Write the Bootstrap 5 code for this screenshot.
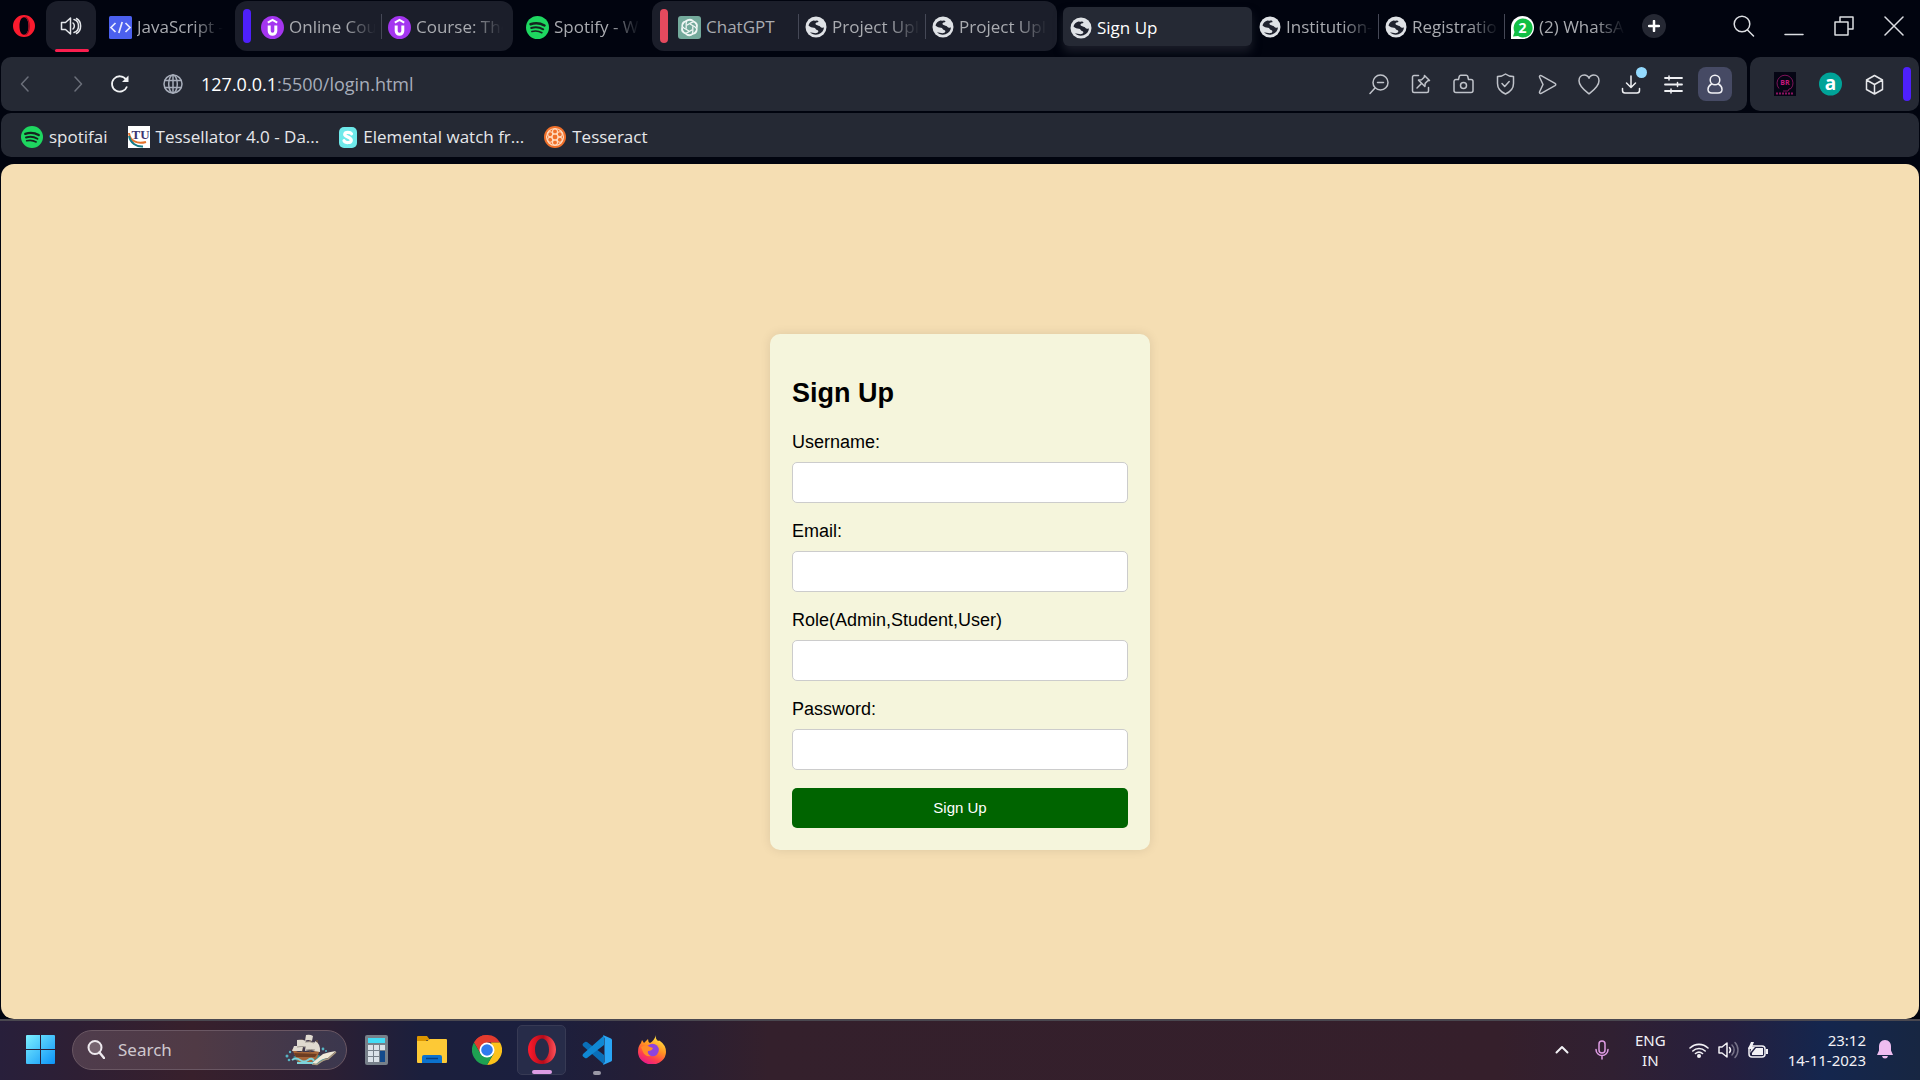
<!DOCTYPE html>
<html lang="en">
<head>
<meta charset="utf-8">
<meta name="viewport" content="width=device-width, initial-scale=1">
<title>Sign Up</title>
<link href="https://cdn.jsdelivr.net/npm/bootstrap@5.3.0/dist/css/bootstrap.min.css" rel="stylesheet">
<style>
  :root { --chrome: #01040f; --panel: #252934; --group: #1b1e2a; --ui: "Open Sans", "Noto Sans", sans-serif; }
  body { background: var(--chrome); font-family: var(--ui); font-size: 17px; line-height: 24px; }
  svg { display: block; flex: none; }
  button { background: none; border: 0; padding: 0; color: inherit; }
  .line-icon { fill: none; stroke: currentColor; stroke-width: 1.5; stroke-linecap: round; stroke-linejoin: round; }

  .tabstrip { padding: 1px 0 0 13px; height: 57px; color: #a9abb0; }
  .tabstrip > * { flex-shrink: 0; }
  .logo-btn { height: 50px; margin-right: 11px; }
  .audio-tab { width: 50px; height: 50px; margin-right: 6px; border-radius: 12px; background: var(--group); color: #e4e6ea; }
  .audio-tab::after { content: ""; width: 34px; height: 3px; border-radius: 2px; background: #fa1e4e; position: absolute; bottom: -1px; left: 9px; }
  .page-tab { flex: 0 1 126px; width: 126px; height: 50px; padding: 2px 5px 0 7px; gap: 5px; color: inherit; text-decoration: none; overflow: hidden; }
  .page-tab span { flex: 1; min-width: 0; overflow: hidden; white-space: nowrap; -webkit-mask-image: linear-gradient(90deg, #000 65%, transparent); mask-image: linear-gradient(90deg, #000 65%, transparent); }
  .page-tab.whole span { -webkit-mask-image: none; mask-image: none; }
  .page-tab.divided { background: linear-gradient(#454856, #454856) 0 13px / 1px 25px no-repeat; }
  .tab-group { height: 50px; margin-left: 7px; margin-right: 6px; padding: 0 5px 0 8px; border-radius: 12px; background: var(--group); }
  .tab-group .page-tab { flex-basis: 127px; width: 127px; }
  .group-bar { width: 8px; height: 34px; border-radius: 4px; background: #4e20fb; }
  .group-bar.red { background: #e54a5e; }
  .tab-group .group-bar { margin-right: 3px; }
  .page-tab.current { flex-basis: 189px; width: 189px; height: 39px; margin-top: 6px; border-radius: 6px; background: var(--panel); color: #fff; box-shadow: 0 6px 10px #33364180; }
  .new-tab { width: 24px; height: 24px; margin: 13px 0 0 12px; border-radius: 50%; background: #252833; color: #fff; }
  .win-ctls { padding-right: 1px; }
  .win-ctl { height: 50px; width: 50px; color: #dcdee2; }

  .bars { padding: 0 1px; gap: 2px; }
  .bars-row { gap: 3px; }
  .panel { background: var(--panel); border-radius: 10px; }
  .toolbar { height: 54px; padding-right: 15px; color: #c0c3ca; }
  .nav-btn { width: 51px; height: 40px; color: #6b6f7a; }
  .nav-btn.back { padding-right: 4px; }
  .nav-btn.reload { width: 34px; color: #f1f2f4; }
  .address { margin-left: 26px; gap: 18px; color: #a7adba; font-size: 18px; }
  .address b { font-weight: 400; color: #fff; }
  .tool-btn { width: 42px; height: 40px; }
  .tool-btn.lit { color: #eff0f3; }
  .news-dot { width: 11px; height: 11px; border-radius: 50%; background: #94dafe; top: 3px; right: 5px; }
  .account { width: 34px; height: 34px; margin-left: 4px; border-radius: 8px; background: #464a64; color: #f2f2f6; }
  .side-panel { padding: 0 8px 0 24px; color: #e6e7ea; }
  .side-panel .group-bar { margin-left: 19px; }
  .side-gap { margin-left: 23px; }
  .bookmarks { height: 44px; padding: 4px 0 0 20px; gap: 20px; margin-bottom: 7px; }
  .bookmarks a { gap: 6px; color: #e6e7ea; text-decoration: none; white-space: nowrap; }

  .viewport-page { margin: 0 1px; border-radius: 13px; background: #f5deb3; font-family: "Liberation Sans", Arial, sans-serif; font-size: 18px; line-height: 21px; color: #000; }
  .signup { width: 380px; padding: 22px; border-radius: 10px; background: #f5f5dc; box-shadow: 0 0 11px rgba(0,0,0,.1); }
  .signup h2 { font-size: 27px; font-weight: 700; line-height: 30px; margin: 22px 0 24px; }
  .signup label { margin-bottom: 9px; display: block; }
  .signup .form-control { height: 41px; margin-bottom: 18px; border: 1px solid #ccc; border-radius: 5px; background: #fff; }
  .signup .btn { height: 40px; background: #006400; color: #fff; border: 0; border-radius: 5px; font-size: 15px; line-height: 18px; }

  .taskbar { height: 61px; padding: 0 0 2px 26px; border-top: 2px solid #4a4850; color: #f2f1f5; font-family: "Noto Sans", sans-serif; font-size: 15px; line-height: 20px;
    background: linear-gradient(90deg, #281f3b 0, #2e1f34 4%, #38202c 10%, #2c1f33 17%, #1b1f3d 22%, #1b1f3e 28%, #241e36 33%, #34202c 40%, #351f2b 78%, #302032 84%, #261f3e 90%, #14264e 95%, #172642 100%); }
  .search-pill { width: 275px; height: 40px; margin-left: 17px; padding: 0 9px 0 14px; border: 1px solid #6a5763; border-radius: 20px; background: linear-gradient(90deg, #4f3c4c, #503a45 45%, #3b374e); }
  .search-pill input { flex: 1; min-width: 0; margin-left: 13px; padding: 0; border: 0; outline: 0; background: none; color: #fff; font-size: 17px; }
  .search-pill input::placeholder { color: #cfc8cf; opacity: 1; }
  .task-apps { margin-left: 2px; }
  .task-apps button { width: 55px; height: 50px; }
  .task-apps .open { background: #272c49; border: 1px solid #373a54; border-radius: 5px; width: 49px; margin: 0 3px; }
  .run-mark { width: 8px; height: 4px; border-radius: 2px; background: #9a98a6; bottom: 0; left: 50%; transform: translateX(-50%); }
  .open .run-mark { width: 20px; background: #dc9de4; }
  .tray { padding-right: 27px; }
  .tray-gap { margin-left: 26px; }
  .status-btn { margin-left: 23px; gap: 9px; }
  .clock-btn { margin-left: 20px; }
  .bell-btn { margin-left: 11px; }
</style>
</head>
<body class="d-flex flex-column min-vh-100 overflow-x-hidden">

<svg width="0" height="0" class="position-absolute" aria-hidden="true">
  <symbol id="earth" viewBox="0 0 22 22"><circle cx="11" cy="11" r="10.5" fill="#dfe2e6"/><path d="M8.500 4.500C6 5 4 7 3.500 9.500c1.700 1.700 3.500 2.200 5.500 2.200 1.700 0 1.400 2 3 2.400 2.200.6 1.500 2.600-.5 3-1.800.4-5-.8-6.500-.8 2 2.200 5.500 3 8.500 2 3.500-1.200 5.300-4 5.500-7-1.500 1-3 .6-3.700-.6-.8-1.300-2.600-.8-4.200-1.900-1.500-1.200-.3-2.200 1.600-2.500C14.500 6 13 4 11 4.700c-1 .3-1.500-.5-2.500-.2z" fill="#20232f"/></symbol>
  <symbol id="udemy" viewBox="0 0 23 23"><circle cx="11.500" cy="11.500" r="11.500" fill="#a435f0"/><path d="M6.800 6.600 11.500 3.800l4.700 2.800" fill="none" stroke="#fff" stroke-width="2"/><path d="M8.200 9.500v5.500a3.300 3.300 0 0 0 6.600 0V9.500" fill="none" stroke="#fff" stroke-width="3"/></symbol>
  <symbol id="spotify" viewBox="0 0 23 23"><circle cx="11.500" cy="11.500" r="11.500" fill="#1ed760"/><g fill="none" stroke="#15241f" stroke-linecap="round"><path d="M4.500 8.200c4.500-1.500 10-1 14 1.300" stroke-width="2.500"/><path d="M5.200 12c4-1.200 8.500-.7 12 1.300" stroke-width="2"/><path d="M5.900 15.500c3.500-.9 7-.5 10 1.200" stroke-width="1.600"/></g></symbol>
</svg>

<nav class="tabstrip d-flex align-items-start" aria-label="Tabs">
  <button class="logo-btn d-flex align-items-center" aria-label="Menu"><svg width="22" height="22" viewBox="0 0 22 22"><path fill="#fb1b2e" fill-rule="evenodd" d="M11 0a11 11 0 1 0 0 22 11 11 0 0 0 0-22zm0 2.200c3 0 4.500 4 4.500 8.800S14 19.800 11 19.800 6.500 15.800 6.500 11 8 2.200 11 2.200z"/><path d="M12.500 2c5 3.500 5 14.500 0 18" fill="none" stroke="#8d1025" stroke-width="1.200"/></svg></button>
  <button class="audio-tab position-relative d-flex align-items-center justify-content-center" aria-label="Playing tab"><svg class="line-icon" width="22" height="20" viewBox="0 0 22 20"><path d="M1.500 6.500h4L10.500 2v16l-5-4.500h-4zM13 7a4 4 0 0 1 0 6M14 3.500c6 1.500 6 11.500 0 13M16.500 2.500c5.500 3 5.500 12 0 15"/></svg></button>
  <a href="#" class="page-tab d-flex align-items-center"><svg width="23" height="23" viewBox="0 0 23 23"><rect width="23" height="23" rx="1.500" fill="#4b60ee"/><path d="M6.500 7 2 11.500 6.500 16M16.500 7l4.500 4.500-4.500 4.500M13.200 6 9.800 17" fill="none" stroke="#e8ebff" stroke-width="1.700"/></svg><span>JavaScript -</span></a>
  <div class="tab-group d-flex align-items-center">
    <i class="group-bar"></i>
    <a href="#" class="page-tab d-flex align-items-center"><svg width="23" height="23"><use href="#udemy"/></svg><span>Online Cou</span></a>
    <a href="#" class="page-tab divided d-flex align-items-center"><svg width="23" height="23"><use href="#udemy"/></svg><span>Course: The</span></a>
  </div>
  <a href="#" class="page-tab d-flex align-items-center"><svg width="23" height="23"><use href="#spotify"/></svg><span>Spotify - W</span></a>
  <div class="tab-group d-flex align-items-center">
    <i class="group-bar red"></i>
    <a href="#" class="page-tab whole d-flex align-items-center"><svg width="23" height="23" viewBox="0 0 23 23"><rect width="23" height="23" rx="3" fill="#74aa9c"/><g fill="none" stroke="#f0f7f5" stroke-width="1.300"><path id="petal" d="M8.200 12.800V6.900a3.600 3.600 0 0 1 6.700-1.700"/><use href="#petal" transform="rotate(60 11.500 11.500)"/><use href="#petal" transform="rotate(120 11.500 11.500)"/><use href="#petal" transform="rotate(180 11.500 11.500)"/><use href="#petal" transform="rotate(240 11.500 11.500)"/><use href="#petal" transform="rotate(300 11.500 11.500)"/><circle cx="11.500" cy="11.500" r="7.500"/></g></svg><span>ChatGPT</span></a>
    <a href="#" class="page-tab divided d-flex align-items-center"><svg width="22" height="22"><use href="#earth"/></svg><span>Project Upl</span></a>
    <a href="#" class="page-tab divided d-flex align-items-center"><svg width="22" height="22"><use href="#earth"/></svg><span>Project Upl</span></a>
  </div>
  <a href="#" class="page-tab current whole d-flex align-items-center" aria-current="page"><svg width="22" height="22"><use href="#earth"/></svg><span>Sign Up</span></a>
  <a href="#" class="page-tab d-flex align-items-center"><svg width="22" height="22"><use href="#earth"/></svg><span>Institution-</span></a>
  <a href="#" class="page-tab divided d-flex align-items-center"><svg width="22" height="22"><use href="#earth"/></svg><span>Registratio</span></a>
  <a href="#" class="page-tab divided d-flex align-items-center"><svg width="23" height="23" viewBox="0 0 23 23"><path d="M0 23V11.500A11.500 11.500 0 1 1 11.500 23z" fill="#fff"/><path d="M2 20.500l1.500-4.500A9.500 9.500 0 1 1 7 20z" fill="#12bf45"/><text x="11.500" y="16.500" text-anchor="middle" font-size="14" font-weight="700" fill="#fff">2</text></svg><span>(2) WhatsA</span></a>
  <button class="new-tab d-flex align-items-center justify-content-center" aria-label="New tab"><svg width="12" height="12" viewBox="0 0 12 12"><path d="M6 1v10M1 6h10" stroke="#fff" stroke-width="2.500" stroke-linecap="round"/></svg></button>
  <div class="win-ctls d-flex ms-auto">
    <button class="win-ctl d-flex align-items-center justify-content-center" aria-label="Search tabs"><svg class="line-icon" width="22" height="22" viewBox="0 0 22 22"><circle cx="9" cy="9" r="7.800"/><path d="m14.500 15 6 6"/></svg></button>
    <button class="win-ctl d-flex align-items-center justify-content-center" aria-label="Minimize"><svg class="line-icon" width="20" height="22" viewBox="0 0 20 22"><path d="M1 19.500h18"/></svg></button>
    <button class="win-ctl d-flex align-items-center justify-content-center" aria-label="Restore"><svg class="line-icon" width="20" height="20" viewBox="0 0 20 20"><path d="M1 6h13v13H1zM6 6V1h13v12h-5"/></svg></button>
    <button class="win-ctl d-flex align-items-center justify-content-center" aria-label="Close"><svg class="line-icon" width="20" height="20" viewBox="0 0 20 20"><path d="m1 1 18 18M19 1 1 19"/></svg></button>
  </div>
</nav>

<div class="bars d-flex flex-column">
  <div class="bars-row d-flex">
    <div class="toolbar panel d-flex align-items-center flex-grow-1">
      <button class="nav-btn back d-flex align-items-center justify-content-center" aria-label="Back"><svg class="line-icon" width="10" height="16" viewBox="0 0 10 16"><path d="M8 1 1.500 8 8 15"/></svg></button>
      <button class="nav-btn d-flex align-items-center justify-content-center" aria-label="Forward"><svg class="line-icon" width="10" height="16" viewBox="0 0 10 16"><path d="m2 1 6.500 7L2 15"/></svg></button>
      <button class="nav-btn reload d-flex align-items-center justify-content-center" aria-label="Reload"><svg width="20" height="20" viewBox="0 0 20 20"><path d="M17 12.500a7.700 7.700 0 1 1-1-7" fill="none" stroke="currentColor" stroke-width="1.800"/><path d="M18.500 1.500V8H12z" fill="currentColor"/></svg></button>
      <div class="address d-flex align-items-center flex-grow-1">
        <svg class="line-icon" width="20" height="20" viewBox="0 0 20 20"><circle cx="10" cy="10" r="9"/><ellipse cx="10" cy="10" rx="4.300" ry="9"/><path d="M10 1v18M1.800 6.500h16.400M1.800 13.500h16.400"/></svg>
        <div role="textbox" aria-label="Address" tabindex="0"><b>127.0.0.1</b>:5500/login.html</div>
      </div>
      <button class="tool-btn d-flex align-items-center justify-content-center" aria-label="Zoom level"><svg class="line-icon" width="20" height="21" viewBox="0 0 20 21"><circle cx="11.500" cy="8.500" r="7.500"/><path d="M8.500 8.500h6M6 14l-5 5.500"/></svg></button>
      <button class="tool-btn d-flex align-items-center justify-content-center" aria-label="Pinboards"><svg class="line-icon" width="20" height="20" viewBox="0 0 20 20"><path d="M7.500 1.500H3A1.500 1.500 0 0 0 1.500 3v14A1.500 1.500 0 0 0 3 18.500h13a1.500 1.500 0 0 0 1.500-1.500v-3.500M13.500 1.500l5 5-1.700.3-2.600 2.600-.3 3.100-6.400-6.400 3.100-.3 2.600-2.600zM10.500 9.500 6 14"/></svg></button>
      <button class="tool-btn d-flex align-items-center justify-content-center" aria-label="Snapshot"><svg class="line-icon" width="21" height="20" viewBox="0 0 21 20"><path d="M3 5.500h2.500l.8-3.200a1.500 1.500 0 0 1 1.400-1h5.600a1.500 1.500 0 0 1 1.400 1l.8 3.200H18a2 2 0 0 1 2 2v9a2 2 0 0 1-2 2H3a2 2 0 0 1-2-2v-9a2 2 0 0 1 2-2z"/><circle cx="10.500" cy="11.500" r="3"/></svg></button>
      <button class="tool-btn d-flex align-items-center justify-content-center" aria-label="Shield"><svg class="line-icon" width="19" height="22" viewBox="0 0 19 22"><path d="M9.500 1c2.500 2 5 2.500 8 2.500v7c0 5.500-3.500 8.500-8 10.500-4.500-2-8-5-8-10.500v-7c3 0 5.500-.5 8-2.500zM6 10.500l2.700 3 4.500-5"/></svg></button>
      <button class="tool-btn d-flex align-items-center justify-content-center" aria-label="Send"><svg class="line-icon" width="19" height="21" viewBox="0 0 19 21"><path d="M3.200 1.700 17 9.300c1 .6 1 1.800 0 2.400L3.200 19.300c-1.400.7-2-.6-1.600-1.600L5 10.500 1.600 3.300c-.4-1 .2-2.300 1.600-1.600z"/></svg></button>
      <button class="tool-btn d-flex align-items-center justify-content-center" aria-label="Bookmark"><svg class="line-icon" width="22" height="21" viewBox="0 0 22 21"><path d="M11 19.800C7 16.500 1 12.500 1 6.700 1 3.300 3.300 1 6.200 1 8.500 1 10.200 2.300 11 4.300 11.800 2.300 13.500 1 15.800 1 18.700 1 21 3.300 21 6.700c0 5.800-6 9.800-10 13.100z"/></svg></button>
      <button class="tool-btn lit position-relative d-flex align-items-center justify-content-center" aria-label="Downloads"><svg class="line-icon" width="20" height="20" viewBox="0 0 20 20"><path d="M10 2v11M5.500 9 10 13.500 14.500 9M1.500 14.500v2a2.500 2.500 0 0 0 2.500 2.500h12a2.500 2.500 0 0 0 2.500-2.500v-2"/></svg><i class="news-dot position-absolute"></i></button>
      <button class="tool-btn lit d-flex align-items-center justify-content-center" aria-label="Easy setup"><svg class="line-icon" width="19" height="19" viewBox="0 0 19 19"><path d="M1 3h17M1 9.500h17M1 16h17" stroke-width="1.800"/><path d="M5 1v4M13.500 7.500v4M7 14v4"/></svg></button>
      <button class="account d-flex align-items-center justify-content-center" aria-label="Account"><svg class="line-icon" width="16" height="20" viewBox="0 0 16 20"><circle cx="8" cy="6" r="4.800"/><path d="M4.500 10C2 11.500 1 13.500 1 15.500 1 17.800 2.500 19 5 19h6c2.500 0 4-1.200 4-3.500 0-2-1-4-3.500-5.500"/></svg></button>
    </div>
    <div class="side-panel panel d-flex align-items-center">
      <button aria-label="Blend extension"><svg width="22" height="24" viewBox="0 0 22 24"><rect width="22" height="24" fill="#050514"/><path d="M5 16.500a8 8 0 1 1 12 0l-2 .5-1 2H9" fill="none" stroke="#7d1358" stroke-width="1"/><text x="11" y="13" text-anchor="middle" font-size="7" font-weight="700" fill="#c3177d">BR</text><path d="M2 21.500h18" stroke="#8d1260" stroke-width="2" stroke-dasharray="2 1"/></svg></button>
      <button class="side-gap" aria-label="Alexa extension"><svg width="23" height="24" viewBox="0 0 23 24"><circle cx="11.500" cy="12" r="11.500" fill="#00a398"/><text x="11.500" y="17.500" text-anchor="middle" font-size="19" font-weight="700" fill="#fff">a</text></svg></button>
      <button class="side-gap" aria-label="Extensions"><svg class="line-icon" width="19" height="21" viewBox="0 0 19 21"><path d="M9.500 1.500 17.500 6v9.500l-8 4.500-8-4.500V6zM1.500 6l8 4.500 8-4.500M9.500 10.500V20"/></svg></button>
      <i class="group-bar"></i>
    </div>
  </div>
  <nav class="bookmarks panel d-flex align-items-center" aria-label="Bookmarks">
    <a href="#" class="d-flex align-items-center"><svg width="22" height="22"><use href="#spotify" width="22" height="22"/></svg>spotifai</a>
    <a href="#" class="d-flex align-items-center"><svg width="22" height="22" viewBox="0 0 22 22"><rect width="22" height="22" fill="#fff"/><text x="12.500" y="13" text-anchor="middle" font-family="Liberation Serif" font-size="13" font-weight="700" fill="#3d3670">TU</text><path d="M1 7c1 8 8 11.500 17 9" fill="none" stroke="#e5722a" stroke-width="2"/><path d="M1 10c1.500 7 7 11 14 10.500" fill="none" stroke="#157a86" stroke-width="2"/></svg>Tessellator 4.0 - Da...</a>
    <a href="#" class="d-flex align-items-center"><svg width="18" height="21" viewBox="0 0 18 21"><rect width="18" height="21" rx="5" fill="#6ee9ea"/><path d="M12.500 6.800C11.500 5 6 4.500 5.700 7.300c-.2 2.900 6.800 2.400 6.600 6-.2 3-6 2.800-7.300.4" fill="none" stroke="#fff" stroke-width="3.200" stroke-linecap="round"/></svg>Elemental watch fr...</a>
    <a href="#" class="d-flex align-items-center"><svg width="22" height="22" viewBox="0 0 22 22"><circle cx="11" cy="11" r="11" fill="#f0702a"/><g fill="none" stroke="#ffd9bd" stroke-width="1.100"><circle cx="11" cy="11" r="8.500"/><circle cx="11" cy="11" r="3"/><circle cx="11" cy="5.500" r="2.500"/><circle cx="11" cy="16.500" r="2.500"/><circle cx="6.200" cy="8.200" r="2.500"/><circle cx="15.800" cy="8.200" r="2.500"/><circle cx="6.200" cy="13.800" r="2.500"/><circle cx="15.800" cy="13.800" r="2.500"/></g></svg>Tesseract</a>
  </nav>
</div>

<main class="viewport-page flex-grow-1 d-flex align-items-center justify-content-center">
  <form class="signup">
    <h2>Sign Up</h2>
    <label for="username">Username:</label>
    <input class="form-control" type="text" id="username">
    <label for="email">Email:</label>
    <input class="form-control" type="email" id="email">
    <label for="role">Role(Admin,Student,User)</label>
    <input class="form-control" type="text" id="role">
    <label for="password">Password:</label>
    <input class="form-control" type="password" id="password">
    <button class="btn w-100" type="submit">Sign Up</button>
  </form>
</main>

<footer class="taskbar d-flex align-items-center">
  <button aria-label="Start"><svg width="29" height="29" viewBox="0 0 29 29"><defs><linearGradient id="win" gradientUnits="userSpaceOnUse" x1="0" y1="0" x2="29" y2="29"><stop stop-color="#7df0ff"/><stop offset="1" stop-color="#0c93f7"/></linearGradient></defs><path fill="url(#win)" d="M0 1Q0 0 1 0h13v14H0zM15 0h13q1 0 1 1v13H15zM0 15h14v14H1q-1 0-1-1zM15 15h14v13q0 1-1 1H15z"/></svg></button>
  <div class="search-pill d-flex align-items-center">
    <svg width="18" height="19" viewBox="0 0 18 19"><circle cx="8" cy="7.500" r="6.500" fill="#75636f" stroke="#eee9ee" stroke-width="2"/><path d="m12.500 12.500 4.500 5.500" stroke="#eee9ee" stroke-width="2.400" stroke-linecap="round"/></svg>
    <input type="search" placeholder="Search" aria-label="Search">
    <svg width="52" height="32" viewBox="0 0 52 32"><path d="M8 23c7-5 27-4 33 2l-8 5H15z" fill="#37909b"/><path d="m7 15 6 3h15l7-3-3 9-5 4H13z" fill="#a5663a"/><path d="m9 19 23 1-2 3H11z" fill="#6d3d22"/><path d="M25 1v18M17 5v13M32 6v12" stroke="#7b5a40" stroke-width="1"/><path d="M21 1q4-1 7 1l-1 5q-4-2-7 0zM12 6q5-1 9 1v6q-5-1-9 1zM21 8q6-1 10 1l-1 8q-5-2-10 0zM9 12q5-1 9 1l-1 4H7zM30 7q6 3 5 11l-6-1z" fill="#e0dad0"/><path d="M20 8q5-1 9 1M12 13q5-1 9 0M21 16q5-1 9 0" fill="none" stroke="#9a938c"/><path d="m27 29 11-9q6-2 13-3l-8 7q-6 0-12 6z" fill="#f1ead9"/><path d="m27 30 5 .5q6-5 11-5.500l8-7" fill="none" stroke="#ab9b80" stroke-width="1.500"/><path d="M7 26q4-3 8 0t8 0 6 1M12 29h16" fill="none" stroke="#7ed3da" stroke-width="2"/><g fill="#56b4c4"><circle cx="2" cy="22" r="1.500"/><circle cx="5" cy="18" r="1.200"/><circle cx="4" cy="26" r="1.300"/><circle cx="38" cy="15" r="1.400"/><circle cx="41" cy="17" r="1"/></g></svg>
  </div>
  <div class="task-apps d-flex align-items-center">
    <button class="d-flex align-items-center justify-content-center" aria-label="Calculator"><svg width="23" height="30" viewBox="0 0 23 30"><rect width="23" height="30" rx="2" fill="#77808a"/><rect x="3" y="3" width="17" height="5" fill="#42dcf6"/><path fill="#dbe2e9" d="M3 10h5v5H3zM9 10h5v5H9zM15 10h5v5h-5zM3 16h5v5H3zM9 16h5v5H9zM3 22h5v5H3zM9 22h5v5H9z"/><path fill="#134a8c" d="M15 16h5v11h-5z"/></svg></button>
    <button class="d-flex align-items-center justify-content-center" aria-label="File Explorer"><svg width="30" height="27" viewBox="0 0 30 27"><path d="M0 1q0-1 1-1h9l3 4h-3L8 6H0z" fill="#dc9500"/><path d="M0 5h10l3-2h16q1 0 1 1v22q0 1-1 1H1q-1 0-1-1z" fill="#fdc936"/><path d="M5 27v-6q0-2 2-2h16q2 0 2 2v6z" fill="#0c72ce"/><path d="M9 22.500h12" stroke="#063f82" stroke-width="1.500"/></svg></button>
    <button class="d-flex align-items-center justify-content-center" aria-label="Chrome"><svg width="30" height="30" viewBox="0 0 30 30"><path d="M2 7.500A15 15 0 0 1 28 7.500H15z" fill="#e33b2e"/><path d="M2 7.500A15 15 0 0 1 15 0v15L8.500 18.800z" fill="#e33b2e"/><path d="M28 7.500A15 15 0 0 1 15 30l6.500-11.200L19 7.500z" fill="#fcc21b"/><path d="M2 7.500A15 15 0 0 0 15 30l6.500-11.200-13 0z" fill="#1ea152"/><circle cx="15" cy="15" r="7.500" fill="#fff"/><circle cx="15" cy="15" r="5.800" fill="#2f7bed"/></svg></button>
    <button class="open position-relative d-flex align-items-center justify-content-center" aria-label="Opera"><svg width="28" height="29" viewBox="0 0 28 29"><defs><linearGradient id="op"><stop stop-color="#ff1b2d"/><stop offset=".45" stop-color="#c00e1c"/><stop offset=".55" stop-color="#b80b1a"/><stop offset="1" stop-color="#ff5058"/></linearGradient></defs><path fill="url(#op)" fill-rule="evenodd" d="M14 0C6 0 0 6 0 14.500S6 29 14 29s14-6 14-14.500S22 0 14 0zm0 3.500c4 0 7 5 7 11s-3 11-7 11-7-5-7-11 3-11 7-11z"/></svg><i class="run-mark position-absolute"></i></button>
    <button class="position-relative d-flex align-items-center justify-content-center" aria-label="Visual Studio Code"><svg width="30" height="30" viewBox="0 0 30 30"><path d="m1 8.500 2-1.600q1-.6 2 .2L22 20v9.500L1 11q-1-1.500 0-2.500z" fill="#0a6fb8"/><path d="m1 21.500 2 1.600q1 .6 2-.2L22 10V.5L1 19q-1 1.500 0 2.500z" fill="#1088d3"/><path d="m21 0 8 3.500q1 .5 1 1.500v20q0 1-1 1.500L21 30l1.500-3V3z" fill="#29a5f5"/></svg><i class="run-mark position-absolute"></i></button>
    <button class="d-flex align-items-center justify-content-center" aria-label="Firefox"><svg width="28" height="29" viewBox="0 0 28 29"><defs><linearGradient id="fx" x1=".8" y1="0" x2=".3" y2="1"><stop stop-color="#fff24a"/><stop offset=".45" stop-color="#ff9321"/><stop offset=".75" stop-color="#ff3f4d"/><stop offset="1" stop-color="#e5178f"/></linearGradient></defs><path fill="url(#fx)" d="M18 0q-1 4 2 6 1-1 2 0 6 4 6 11a14 12.500 0 0 1-28 0q0-6 3-9l1-3 2 3 4-4q0 3 2 4 4-2 6-8z"/><circle cx="14.500" cy="15" r="6.300" fill="#8e43dd"/><path d="M3 12q5-3 9 0l3 1q-1 3-5 3-1 3 3 5-6 1-8-4z" fill="#ff8b27"/></svg></button>
  </div>
  <div class="tray d-flex align-items-center ms-auto">
    <button aria-label="Show hidden icons"><svg class="line-icon" width="14" height="9" viewBox="0 0 14 9"><path d="m1.500 7.500 5.500-5.500 5.500 5.500" stroke-width="2"/></svg></button>
    <button class="tray-gap" aria-label="Microphone"><svg class="line-icon" width="14" height="20" viewBox="0 0 14 20" stroke="#dd9be2" color="#dd9be2"><rect x="4" y="1" width="6" height="12" rx="3"/><path d="M1 9.500a6 6 0 0 0 12 0M7 15.500V19"/></svg></button>
    <button class="tray-gap text-center" aria-label="Language">ENG<br>IN</button>
    <button class="status-btn d-flex align-items-center" aria-label="Network, sound and battery">
      <svg width="20" height="16" viewBox="0 0 20 16"><g fill="none" stroke="#f2f1f5" stroke-width="1.600" stroke-linecap="round"><path d="M1 6a13 13 0 0 1 18 0M3.800 9a9 9 0 0 1 12.400 0M6.500 11.500a5.500 5.500 0 0 1 7 0"/></g><circle cx="10" cy="14" r="2" fill="#f2f1f5"/></svg>
      <svg class="line-icon" width="21" height="18" viewBox="0 0 21 18"><path d="M1 6h3l5-4v14l-5-4H1zM11.500 6.500a4 4 0 0 1 0 5"/><path d="M14 4a7 7 0 0 1 0 10M17 1.500a11 11 0 0 1 0 15" opacity=".4"/></svg>
      <svg width="20" height="16" viewBox="0 0 20 16"><rect x="1" y="4" width="16" height="11" rx="3" fill="none" stroke="#f2f1f5" stroke-width="1.500"/><path d="M8 6h7v7H4v-2zM18 7h2v5h-2zM3 0 0 7h3L2 11l5-6H4l2-5z" fill="#f2f1f5"/></svg>
    </button>
    <button class="clock-btn text-end" aria-label="Clock">23:12<br>14-11-2023</button>
    <button class="bell-btn" aria-label="Notifications"><svg width="16" height="19" viewBox="0 0 16 19"><path d="M8 0c4 0 6 3 6 6.500v4l2 4.500H0l2-4.500v-4C2 3 4 0 8 0zM5 16h6q-.5 2.500-3 2.500T5 16z" fill="#efbdf0"/></svg></button>
  </div>
</footer>
<script src="https://cdn.jsdelivr.net/npm/bootstrap@5.3.0/dist/js/bootstrap.bundle.min.js"></script>
</body>
</html>
